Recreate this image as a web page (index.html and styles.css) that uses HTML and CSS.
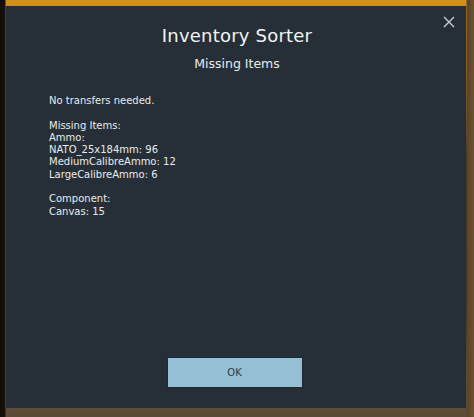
FILE: index.html
```html
<!DOCTYPE html>
<html>
<head>
<meta charset="utf-8">
<link rel="stylesheet" href="styles.css">
</head>
<body>
<div class="dialog">
  <button class="close" aria-label="Close">
    <svg width="12" height="12" viewBox="0 0 12 12"><path d="M1 1L11 11M11 1L1 11" stroke="#c9ced2" stroke-width="1.4" fill="none"/></svg>
  </button>
  <h1 class="title">Inventory Sorter</h1>
  <h2 class="subtitle">Missing Items</h2>
  <div class="content">
    <p>No transfers needed.</p>
    <p>Missing Items:<br>Ammo:<br>NATO_25x184mm: 96<br>MediumCalibreAmmo: 12<br>LargeCalibreAmmo: 6</p>
    <p>Component:<br>Canvas: 15</p>
  </div>
  <div class="actions">
    <button class="ok">OK</button>
  </div>
</div>
</body>
</html>
```
FILE: styles.css
```css
html, body {
  margin: 0;
  padding: 0;
}
body {
  width: 474px;
  height: 417px;
  overflow: hidden;
  background:
    linear-gradient(to right, #120c06 0, #1a120a 5px, transparent 6px, transparent 466px, #5a4328 467px, #6b5234 474px),
    linear-gradient(to bottom, #d4901c 0, #c07e14 60px, #7a5620 120px, #3b2c1a 160px, #2e2418 300px, #6a553c 380px, #5b4a36 417px);
  font-family: "DejaVu Sans", "Liberation Sans", sans-serif;
  padding-top: 6px;
  padding-left: 5px;
  box-sizing: border-box;
}
.dialog {
  position: relative;
  width: 461px;
  height: 402px;
  box-sizing: border-box;
  background: #262f37;
  border-left: 1px solid #36414a;
  display: flex;
  flex-direction: column;
  color: #e8ecee;
}
.close {
  position: absolute;
  top: 9px;
  right: 10px;
  width: 14px;
  height: 14px;
  padding: 1px;
  margin: 0;
  border: 0;
  background: transparent;
  line-height: 0;
}
.title {
  margin: 19px 0 0;
  padding-left: 2px;
  text-align: center;
  font-size: 18px;
  font-weight: normal;
  line-height: 22px;
  letter-spacing: 0.2px;
  color: #f2f4f5;
}
.subtitle {
  margin: 9px 0 0;
  padding-left: 2px;
  text-align: center;
  font-size: 12.5px;
  font-weight: normal;
  line-height: 16px;
  color: #e8ecee;
}
.content {
  margin: 23px 0 0 43px;
  font-size: 10px;
  line-height: 12.3px;
  flex: 1;
}
.content p {
  margin: 0 0 12.3px;
}
.actions {
  display: flex;
  justify-content: center;
  padding-bottom: 20px;
  padding-right: 3px;
}
.ok {
  width: 136px;
  height: 31px;
  margin: 0;
  background: #94bfd4;
  border: 1px solid #1e2a33;
  color: #2a3a48;
  font-family: "DejaVu Sans", "Liberation Sans", sans-serif;
  font-size: 10px;
}
```
